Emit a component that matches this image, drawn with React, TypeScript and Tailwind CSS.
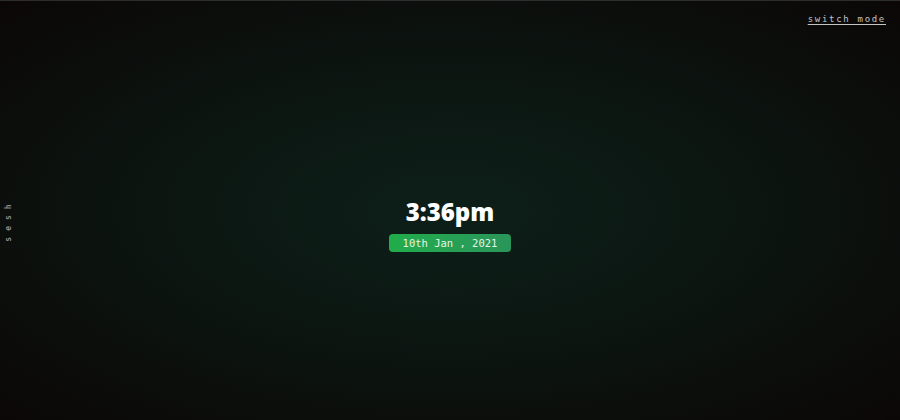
export default function App() {
  return (
    <div className="relative flex h-[420px] w-[900px] flex-col items-center justify-center overflow-hidden border-t border-[#2b2e2c] bg-[radial-gradient(ellipse_at_center,#0d1f19_0%,#0c1712_40%,#0b0707_100%)]">
      <a
        href="#"
        className="absolute right-[14px] top-[12px] font-['DejaVu_Sans_Mono',monospace] text-[9px] tracking-[1.7px] text-[#c4c4c4] underline underline-offset-2"
      >
        switch mode
      </a>

      <div className="absolute left-[3px] top-[198px] flex h-[48px] w-[12px] items-center justify-center">
        <span className="-rotate-90 whitespace-nowrap pl-[6px] font-['DejaVu_Sans_Mono',monospace] text-[8px] font-bold tracking-[6px] text-[#8a8a8a]">
          sesh
        </span>
      </div>

      <div className="mt-[27px] flex flex-col items-center gap-[7px]">
        <h1 className="font-['Open_Sans',sans-serif] text-[24px] font-extrabold leading-[30px] text-white">
          3:36pm
        </h1>
        <div className="rounded-[4px] bg-gradient-to-r from-[#21ad4b] to-[#2a955a] px-[14px] py-[2px] font-['DejaVu_Sans_Mono',monospace] text-[10.5px] leading-[14px] text-[#e3f5e6]">
          10th Jan , 2021
        </div>
      </div>
    </div>
  )
}
